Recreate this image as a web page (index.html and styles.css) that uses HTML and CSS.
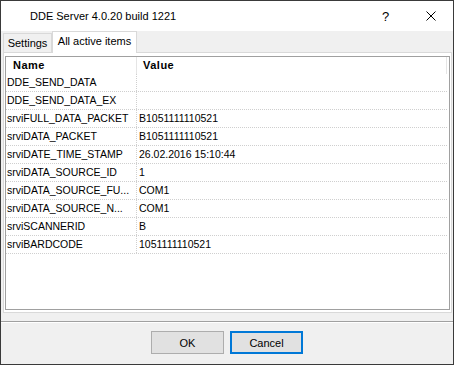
FILE: index.html
```
<!DOCTYPE html>
<html>
<head>
  <title>DDE Server 4.0.20 build 1221</title>
  <link rel="stylesheet" href="styles.css">
</head>
<body>
<div class="window">
  <div class="titlebar">
    <div class="title">DDE Server 4.0.20 build 1221</div>
    <div class="cap-btn help">?</div>
    <div class="cap-btn close">
      <svg width="10" height="10" viewBox="0 0 10 10">
        <path d="M0.5 0.5 L9.5 9.5 M9.5 0.5 L0.5 9.5" stroke="#000" stroke-width="1" fill="none"/>
      </svg>
    </div>
  </div>

  <div class="tabs">
    <div class="tab tab-settings">Settings</div>
    <div class="tab tab-active">All active items</div>
  </div>

  <div class="panel">
    <div class="list">
      <div class="list-head">
        <div class="hcol hname">Name</div>
        <div class="hcol hvalue">Value</div>
      </div>
      <div class="row"><div class="c1">DDE_SEND_DATA</div><div class="c2"></div></div>
      <div class="row"><div class="c1">DDE_SEND_DATA_EX</div><div class="c2"></div></div>
      <div class="row"><div class="c1">srviFULL_DATA_PACKET</div><div class="c2">B1051111110521</div></div>
      <div class="row"><div class="c1">srviDATA_PACKET</div><div class="c2">B1051111110521</div></div>
      <div class="row"><div class="c1">srviDATE_TIME_STAMP</div><div class="c2">26.02.2016 15:10:44</div></div>
      <div class="row"><div class="c1">srviDATA_SOURCE_ID</div><div class="c2">1</div></div>
      <div class="row"><div class="c1">srviDATA_SOURCE_FU...</div><div class="c2">COM1</div></div>
      <div class="row"><div class="c1">srviDATA_SOURCE_N...</div><div class="c2">COM1</div></div>
      <div class="row"><div class="c1">srviSCANNERID</div><div class="c2">B</div></div>
      <div class="row"><div class="c1">srviBARDCODE</div><div class="c2">1051111110521</div></div>
    </div>
  </div>

  <div class="footer">
    <div class="btn">OK</div>
    <div class="btn btn-default">Cancel</div>
  </div>
</div>
</body>
</html>
```

FILE: styles.css
```
body{
  margin:0;
  font-family:"Liberation Sans", Arial, sans-serif;
  font-size:11px;
  color:#000;
}

.window{
  width:454px;
  height:365px;
  box-sizing:border-box;
  border:1px solid #3a3a3a;
  background:#f0f0f0;
  display:flex;
  flex-direction:column;
}

.titlebar{
  height:30px;
  flex:none;
  background:#fff;
  display:flex;
  align-items:center;
}

.title{
  flex:1;
  padding-left:29px;
  font-size:11px;
}

.cap-btn{
  width:45px;
  height:30px;
  display:flex;
  align-items:center;
  justify-content:center;
}

.help{
  font-size:13px;
}

.tabs{
  height:21px;
  flex:none;
  padding-left:2px;
  display:flex;
  align-items:flex-end;
}

.tab{
  box-sizing:border-box;
  border:1px solid #d9d9d9;
  border-bottom:none;
  text-align:center;
}

.tab-settings{
  width:49px;
  height:19px;
  line-height:18px;
}

.tab-active{
  width:85px;
  height:22px;
  line-height:19px;
  margin-bottom:-1px;
  background:#fff;
  position:relative;
  z-index:1;
}

.panel{
  height:261px;
  flex:none;
  box-sizing:border-box;
  margin:0 1px 0 2px;
  border:1px solid #d9d9d9;
  background:#fff;
  padding:3px 1px 2px 1px;
}

.list{
  height:100%;
  box-sizing:border-box;
  border:1px solid #a0a0a0;
  background:#fff;
}

.list-head{
  height:17px;
  display:grid;
  grid-template-columns:131px 310px;
}

.hcol{
  box-sizing:border-box;
  border-right:1px solid #e5e5e5;
  font-weight:bold;
  letter-spacing:0.5px;
  line-height:17px;
}

.hname{
  padding-left:7px;
}

.hvalue{
  padding-left:6px;
}

.row{
  height:18px;
  box-sizing:border-box;
  display:grid;
  grid-template-columns:131px 310px;
  border-bottom:1px dotted #cfcfcf;
  width:441px;
  font-size:10.5px;
  line-height:17px;
}

.c1{
  border-right:1px dotted #cfcfcf;
  padding-left:1px;
  white-space:nowrap;
  overflow:hidden;
}

.c2{
  padding-left:2px;
  white-space:nowrap;
}

.footer{
  flex:1;
  margin-top:8px;
  border-top:1px solid #a0a0a0;
  box-shadow:inset 0 1px #fff;
  padding-top:9px;
  display:flex;
  justify-content:center;
  align-items:flex-start;
  gap:6px;
}

.btn{
  width:73px;
  height:23px;
  box-sizing:border-box;
  border:1px solid #adadad;
  background:#e1e1e1;
  display:flex;
  align-items:center;
  justify-content:center;
}

.btn-default{
  border:2px solid #0078d7;
}
```
